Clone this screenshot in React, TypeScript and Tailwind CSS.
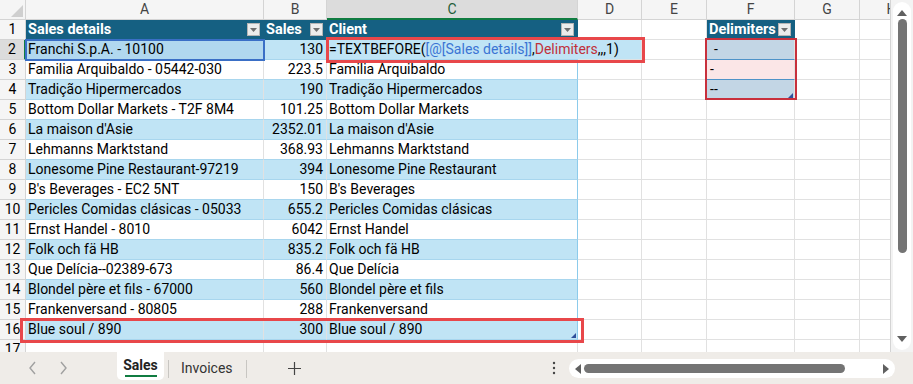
import React from "react";

const FONT = { fontFamily: "Roboto, 'Liberation Sans', Arial, sans-serif" };

const data: [string, string, string][] = [
  ["Franchi S.p.A. - 10100", "130", ""],
  ["Familia Arquibaldo - 05442-030", "223.5", "Familia Arquibaldo"],
  ["Tradição Hipermercados", "190", "Tradição Hipermercados"],
  ["Bottom Dollar Markets - T2F 8M4", "101.25", "Bottom Dollar Markets"],
  ["La maison d'Asie", "2352.01", "La maison d'Asie"],
  ["Lehmanns Marktstand", "368.93", "Lehmanns Marktstand"],
  ["Lonesome Pine Restaurant-97219", "394", "Lonesome Pine Restaurant"],
  ["B's Beverages - EC2 5NT", "150", "B's Beverages"],
  ["Pericles Comidas clásicas - 05033", "655.2", "Pericles Comidas clásicas"],
  ["Ernst Handel - 8010", "6042", "Ernst Handel"],
  ["Folk och fä HB", "835.2", "Folk och fä HB"],
  ["Que Delícia--02389-673", "86.4", "Que Delícia"],
  ["Blondel père et fils - 67000", "560", "Blondel père et fils"],
  ["Frankenversand - 80805", "288", "Frankenversand"],
  ["Blue soul / 890", "300", "Blue soul / 890"],
];

const GRID = "grid grid-cols-[26px_238px_63px_251px_64px_65px_88px_65px_64px]";

function Drop() {
  return (
    <div className="w-[13px] h-[13px] bg-[#ececec] border border-[#b5b5b5] flex items-center justify-center shrink-0">
      <svg width="7" height="4" viewBox="0 0 7 4">
        <path d="M0 0 L7 0 L3.5 4 Z" fill="#6f6f6f" />
      </svg>
    </div>
  );
}

function Cell({
  className = "",
  children,
}: {
  className?: string;
  children?: React.ReactNode;
}) {
  return (
    <div
      className={`h-[20px] border-r border-b border-[#e1e1e1] flex items-center whitespace-nowrap text-[14px] leading-[19px] text-black ${className}`}
    >
      {children}
    </div>
  );
}

function HdrTable({ label }: { label: string }) {
  return (
    <Cell className="bg-[#156082] !border-[#156082] justify-between pl-[2px] pr-[3px] overflow-hidden">
      <span className="font-bold text-white text-[14.5px]">{label}</span>
      <Drop />
    </Cell>
  );
}

function Corner() {
  return (
    <svg width="5" height="5" viewBox="0 0 5 5" className="absolute right-[1px] bottom-[1px]">
      <path d="M5 0 L5 5 L0 5 Z" fill="#2f4f9a" />
    </svg>
  );
}

export default function App() {
  const letters = ["A", "B", "C", "D", "E", "F", "G", "H"];
  return (
    <div className="w-[913px] h-[384px] bg-white overflow-hidden flex flex-col" style={FONT}>
      <div className="flex h-[352px]">
        <div className="relative w-[890px] h-[352px] overflow-hidden">
          <div className={`${GRID} w-[924px]`}>
            {/* column header row */}
            <div className="relative h-[20px] bg-[#f5f5f5] border-r border-b border-[#d4d4d4]">
              <svg width="12" height="12" viewBox="0 0 12 12" className="absolute right-[2px] bottom-[2px]">
                <path d="M12 0 L12 12 L0 12 Z" fill="#cfcfcf" />
              </svg>
            </div>
            {letters.map((l) => (
              <div
                key={l}
                className={`h-[20px] flex items-center justify-center text-[14px] border-r border-[#d4d4d4] ${
                  l === "C"
                    ? "bg-[#dcdcdc] text-[#1e5e3a] border-b-2 border-b-[#107c41]"
                    : "bg-[#f5f5f5] text-[#444] border-b border-b-[#d4d4d4]"
                }`}
              >
                {l}
              </div>
            ))}

            {/* row 1 */}
            <Cell className="bg-[#f5f5f5] justify-center text-[#444] !border-[#d4d4d4]">1</Cell>
            <HdrTable label="Sales details" />
            <HdrTable label="Sales" />
            <HdrTable label="Client" />
            <Cell />
            <Cell />
            <HdrTable label="Delimiters" />
            <Cell />
            <Cell />

            {data.map((r, i) => {
              const rowNum = i + 2;
              const band = rowNum % 2 === 0;
              const bg = band ? "bg-[#c0e4f5]" : "bg-white";
              const tb = "!border-b-[#a8d6ee]";
              const fCell =
                rowNum === 2 ? (
                  <Cell className="bg-[#c3d6e5] !border-b-[#4f93c8] pl-[7px]">-</Cell>
                ) : rowNum === 3 ? (
                  <Cell className="bg-[#fbe6e7] !border-b-[#4f93c8] pl-[3px]">-</Cell>
                ) : rowNum === 4 ? (
                  <Cell className="relative bg-[#c3d6e5] pl-[3px]">
                    <span>-</span>
                    <span>-</span>
                    <Corner />
                  </Cell>
                ) : (
                  <Cell />
                );
              return (
                <React.Fragment key={rowNum}>
                  <Cell
                    className={`justify-center !border-[#d4d4d4] ${
                      rowNum === 2
                        ? "bg-[#dcdcdc] text-[#1e5e3a] !border-r-2 !border-r-[#107c41]"
                        : "bg-[#f5f5f5] text-[#444]"
                    }`}
                  >
                    {rowNum}
                  </Cell>
                  <Cell className={`${rowNum === 2 ? "bg-[#b1d8ef]" : bg} ${tb} pl-[2px] overflow-hidden`}>
                    {r[0]}
                  </Cell>
                  <Cell className={`${bg} ${tb} justify-end pr-[3px]`}>{r[1]}</Cell>
                  {rowNum === 2 ? (
                    <Cell className={`${bg} ${tb} !border-r-0 pl-[2px] overflow-visible relative z-10`}>
                      <span>=TEXTBEFORE(</span>
                      <span className="text-[#3b74d4]">[@[Sales details]]</span>
                      <span>,</span>
                      <span className="text-[#c0303a]">Delimiters</span>
                      <span>,,,1)</span>
                    </Cell>
                  ) : (
                    <Cell className={`${bg} ${tb} !border-r-[#8ccbeb] pl-[2px] relative`}>
                      {r[2]}
                      {rowNum === 16 && <Corner />}
                    </Cell>
                  )}
                  <Cell className={rowNum === 2 ? "bg-[#c0e4f5]" : ""} />
                  <Cell />
                  {fCell}
                  <Cell />
                  <Cell />
                </React.Fragment>
              );
            })}

            {/* row 17 */}
            <Cell className="bg-[#f5f5f5] justify-center text-[#444] !border-[#d4d4d4]">17</Cell>
            <Cell />
            <Cell />
            <Cell />
            <Cell />
            <Cell />
            <Cell />
            <Cell />
            <Cell />
          </div>

          {/* reference highlights & annotations */}
          <div className="absolute left-[25px] top-[39px] w-[240px] h-[22px] border-2 border-[#3a6fc6] pointer-events-none" />
          <div className="absolute left-[705px] top-[38px] w-[92px] h-[62px] border-2 border-[#c8303c] pointer-events-none" />
          <div className="absolute left-[326px] top-[37px] w-[319px] h-[26px] border-[3px] border-[#e8474a] pointer-events-none z-20" />
          <div className="absolute left-[20px] top-[318px] w-[564px] h-[25px] border-[3px] border-[#e8474a] pointer-events-none" />
        </div>

        {/* vertical scrollbar */}
        <div className="w-[23px] h-[352px] bg-[#f3f3f3] border-l border-[#d4d4d4] flex justify-center pt-[2px]">
          <div className="w-[18px] h-[348px] bg-white rounded-[9px] flex flex-col items-center pt-[8px] pb-[4px]">
            <svg width="10" height="6" viewBox="0 0 10 6">
              <path d="M0 6 L5 0 L10 6 Z" fill="#606060" />
            </svg>
            <div className="w-[9px] h-[234px] bg-[#747474] rounded-full mt-[3px]" />
            <div className="flex-1" />
            <svg width="10" height="6" viewBox="0 0 10 6" className="mb-[4px]">
              <path d="M0 0 L10 0 L5 6 Z" fill="#606060" />
            </svg>
          </div>
        </div>
      </div>

      {/* tab bar */}
      <div className="h-[32px] bg-[#efece8] flex items-start">
        <div className="w-[117px] h-[32px] flex items-center pl-[28px] gap-[22px] text-[#a0a0a0]">
          <svg width="9" height="14" viewBox="0 0 9 14">
            <path d="M7 1 L2 7 L7 13" stroke="#a0a0a0" strokeWidth="1.4" fill="none" />
          </svg>
          <svg width="9" height="14" viewBox="0 0 9 14">
            <path d="M2 1 L7 7 L2 13" stroke="#a0a0a0" strokeWidth="1.4" fill="none" />
          </svg>
        </div>
        <div className="w-[47px] h-[28px] bg-white rounded-b-[5px] flex flex-col items-center pt-[5px]">
          <span className="text-[14px] font-bold text-[#222] leading-[16px]">Sales</span>
          <div className="w-[32px] h-[2px] bg-[#107c41] mt-[2px]" />
        </div>
        <div className="w-[1px] h-[18px] bg-[#c8c6c2] mt-[8px] ml-[4px]" />
        <div className="h-[32px] flex items-center pl-[12px] pr-[13px] text-[14px] text-[#333]">Invoices</div>
        <div className="w-[1px] h-[18px] bg-[#c8c6c2] mt-[8px]" />
        <div className="h-[32px] flex items-center ml-[41px]">
          <svg width="13" height="13" viewBox="0 0 13 13">
            <path d="M6.5 0 V13 M0 6.5 H13" stroke="#444" strokeWidth="1.2" />
          </svg>
        </div>
        <div className="h-[32px] flex items-center ml-[251px]">
          <svg width="4" height="14" viewBox="0 0 4 14">
            <circle cx="2" cy="2" r="1.2" fill="#444" />
            <circle cx="2" cy="7" r="1.2" fill="#444" />
            <circle cx="2" cy="12" r="1.2" fill="#444" />
          </svg>
        </div>
        <div className="ml-[13px] mt-[7px] w-[326px] h-[19px] bg-white rounded-[10px] flex items-center px-[6px] gap-[3px]">
          <svg width="6" height="10" viewBox="0 0 6 10">
            <path d="M6 0 L6 10 L0 5 Z" fill="#606060" />
          </svg>
          <div className="w-[261px] h-[9px] bg-[#747474] rounded-full" />
          <div className="flex-1" />
          <svg width="6" height="10" viewBox="0 0 6 10">
            <path d="M0 0 L0 10 L6 5 Z" fill="#606060" />
          </svg>
        </div>
      </div>
    </div>
  );
}
